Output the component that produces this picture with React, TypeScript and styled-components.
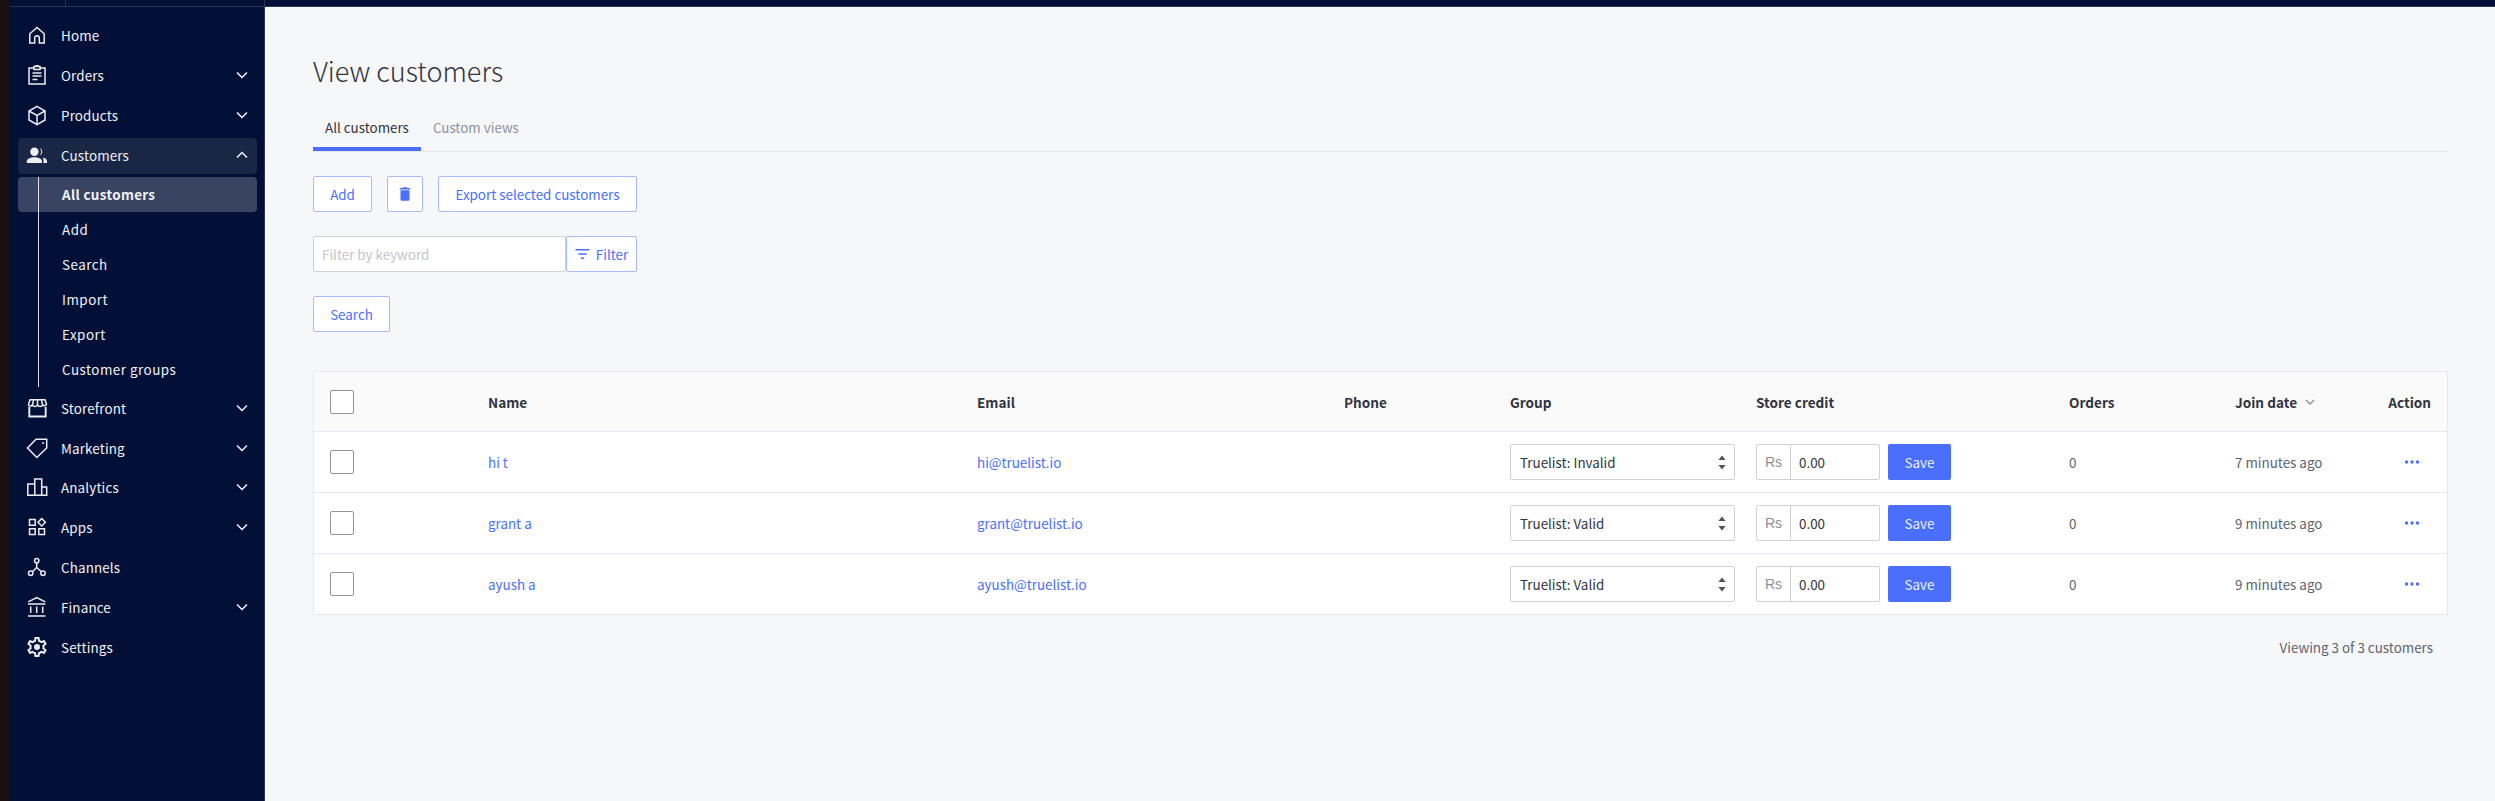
import React from "react";
import styled, { createGlobalStyle } from "styled-components";

const GlobalStyle = createGlobalStyle`
  html, body {
    margin: 0;
    padding: 0;
    background: #f6f7f9;
  }
  * {
    box-sizing: border-box;
  }
`;

const FONT = `"Noto Sans CJK SC", "Source Sans Pro", "Open Sans", sans-serif`;
const BLUE = "#4a6ffc";
const TEXT_SIZE = "13.4px";
const COLS = "174px 489px 367px 166px 246px 313px 166px 140px 1fr";

const Page = styled.div`
  display: flex;
  min-height: 801px;
  height: 100vh;
  overflow: hidden;
  font-family: ${FONT};
  font-size: ${TEXT_SIZE};
  color: #313440;
`;

const Edge = styled.div`
  width: 10px;
  flex: none;
  background: #1a0f12;
`;

const Frame = styled.div`
  flex: 1;
  display: flex;
  flex-direction: column;
  min-width: 0;
`;

const TopBar = styled.div`
  height: 7px;
  flex: none;
  display: flex;
  background: #020f36;
  border-bottom: 1px solid #2c3653;
`;

const TopCell = styled.div<{ $w: number }>`
  width: ${p => p.$w}px;
  flex: none;
  border-right: 1px solid #2c3653;
`;

const Body = styled.div`
  flex: 1;
  display: flex;
  min-height: 0;
`;

const Sidebar = styled.nav`
  width: 255px;
  flex: none;
  background: #020f36;
  border-right: 1px solid #2c3653;
  padding: 8.5px 7px 0 8px;
  color: #f2f3f6;
`;

const NavRow = styled.div<{ $open?: boolean }>`
  height: 39.8px;
  display: flex;
  align-items: center;
  padding: 0 8px 0 7px;
  border-radius: 4px;
  font-size: ${TEXT_SIZE};
  letter-spacing: 0.15px;
  ${p =>
    p.$open &&
    `
    background: #1a2646;
    height: 36px;
    margin: 3.1px 0 3px;
    padding-bottom: 1px;
  `}
`;

const NavIcon = styled.svg`
  width: 24px;
  height: 24px;
  flex: none;
  fill: none;
  stroke: #eceef2;
  stroke-width: 1.5;
  margin-right: 12px;
`;

const FilledNavIcon = styled(NavIcon)`
  fill: #eceef2;
  stroke: none;
`;

const NavLabel = styled.span`
  flex: 1;
`;

const Chevron = styled.svg`
  width: 14px;
  height: 14px;
  fill: none;
  stroke: #f2f3f6;
  stroke-width: 1.5;
`;

const SubList = styled.div`
  position: relative;
  padding-bottom: 1px;
  &::before {
    content: "";
    position: absolute;
    left: 20px;
    top: 0;
    bottom: 1px;
    width: 1px;
    background: #d8dbe3;
  }
`;

const SubRow = styled.div<{ $active?: boolean }>`
  position: relative;
  height: 35px;
  display: flex;
  align-items: center;
  padding: 0 0 1px 44px;
  border-radius: 4px;
  font-size: ${TEXT_SIZE};
  letter-spacing: ${p => (p.$active ? "0.35px" : "0.5px")};
  font-weight: ${p => (p.$active ? 700 : 400)};
  background: ${p => (p.$active ? "rgba(255, 255, 255, 0.22)" : "transparent")};
`;

const Main = styled.main`
  flex: 1;
  min-width: 0;
  padding: 0 47px 0 48px;
`;

const Title = styled.h1`
  margin: 0;
  padding-top: 44px;
  font-size: 27px;
  line-height: 40px;
  font-weight: 300;
  color: #313440;
`;

const Tabs = styled.div`
  display: flex;
  margin-top: 16px;
  border-bottom: 1px solid #e3e5ea;
  height: 45px;
`;

const Tab = styled.div<{ $active?: boolean }>`
  padding: 0 12px;
  height: 44px;
  display: flex;
  align-items: center;
  color: ${p => (p.$active ? "#313440" : "#8c93a0")};
  border-bottom: ${p => (p.$active ? `4px solid ${BLUE}` : "none")};
  padding-bottom: ${p => (p.$active ? "0" : "4px")};
`;

const Toolbar = styled.div`
  display: flex;
  gap: 15px;
  margin-top: 24px;
`;

const OutlineButton = styled.button<{ $w: number }>`
  width: ${p => p.$w}px;
  height: 36px;
  display: inline-flex;
  align-items: center;
  justify-content: center;
  gap: 6px;
  padding: 0;
  background: #fff;
  border: 1px solid #a9b9fd;
  border-radius: 2px;
  font-family: ${FONT};
  font-size: ${TEXT_SIZE};
  color: ${BLUE};
`;

const FilterRow = styled.div`
  display: flex;
  margin-top: 24px;
`;

const KeywordBox = styled.div`
  width: 253px;
  height: 36px;
  display: flex;
  align-items: center;
  padding: 0 0 1px 8px;
  background: #fff;
  border: 1px solid #d0d2d8;
  border-radius: 2px;
  color: #c4c6cc;
`;

const SearchRow = styled.div`
  margin-top: 24px;
`;

const Table = styled.div`
  margin-top: 39px;
  border: 1px solid #e6e7ef;
  background: #fff;
`;

const Row = styled.div<{ $head?: boolean }>`
  display: grid;
  grid-template-columns: ${COLS};
  align-items: center;
  height: ${p => (p.$head ? "60px" : "61px")};
  background: ${p => (p.$head ? "#fafafb" : "#fff")};
  border-bottom: 1px solid #e6e7ef;
  &:last-child {
    border-bottom: none;
    height: 60px;
  }
`;

const HeadCell = styled.div`
  font-weight: 700;
  font-size: 13.6px;
  color: #313440;
  display: flex;
  align-items: center;
  gap: 8px;
`;

const ActionHead = styled(HeadCell)`
  justify-content: flex-end;
  padding-right: 16px;
`;

const CheckCell = styled.div`
  padding-left: 16px;
  display: flex;
`;

const CheckBox = styled.div`
  width: 24px;
  height: 24px;
  background: #fff;
  border: 1px solid #959595;
  border-radius: 2px;
`;

const CustomerLink = styled.a`
  color: ${BLUE};
`;

const Cell = styled.div<{ $muted?: boolean }>`
  color: ${p => (p.$muted ? "#5e6371" : "#313440")};
`;

const GroupSelect = styled.div`
  width: 225px;
  height: 36px;
  display: flex;
  align-items: center;
  justify-content: space-between;
  padding: 0 8px 0 9px;
  border: 1px solid #d0d2d8;
  border-radius: 2px;
  color: #313440;
  background: #fff;
`;

const CreditCell = styled.div`
  display: flex;
  align-items: center;
  gap: 8px;
`;

const CreditField = styled.div`
  width: 124px;
  height: 36px;
  display: flex;
  border: 1px solid #d0d2d8;
  border-radius: 2px;
  background: #fff;
`;

const CreditPrefix = styled.div`
  width: 34px;
  flex: none;
  display: flex;
  align-items: center;
  justify-content: center;
  border-right: 1px solid #d0d2d8;
  color: #8c8f99;
  font-family: "Liberation Sans", sans-serif;
  font-size: 14px;
`;

const CreditValue = styled.div`
  flex: 1;
  display: flex;
  align-items: center;
  padding-left: 8px;
  color: #313440;
`;

const SaveButton = styled.button`
  width: 63px;
  height: 36px;
  padding: 0;
  border: none;
  border-radius: 2px;
  background: ${BLUE};
  color: #eef1ff;
  font-family: ${FONT};
  font-size: ${TEXT_SIZE};
`;

const ActionCell = styled.div`
  display: flex;
  justify-content: flex-end;
  padding-right: 27px;
`;

const ActionDots = styled.svg`
  width: 16px;
  height: 6px;
  fill: ${BLUE};
`;

const Footer = styled.div`
  margin-top: 22px;
  padding-right: 15px;
  text-align: right;
  color: #5e6371;
`;

const ChevronDown = () => (
  <Chevron viewBox="0 0 14 14">
    <path d="M2 4.5l5 5 5-5" />
  </Chevron>
);

const ChevronUp = () => (
  <Chevron viewBox="0 0 14 14">
    <path d="M2 9.5l5-5 5 5" />
  </Chevron>
);

const Home = () => (
  <NavIcon viewBox="0 0 24 24">
    <path d="M12 4.5l-7.2 6.3V20h4.9v-5a2.3 2.3 0 0 1 4.6 0v5h4.9v-9.2z" />
  </NavIcon>
);

const Orders = () => (
  <NavIcon viewBox="0 0 24 24">
    <path d="M9 5H4v16h16V5h-5" />
    <path d="M9 3.5h2v-.8h2v.8h2v3H9z" />
    <path d="M7.5 10h9M7.5 13h9M7.5 16.5h5" />
  </NavIcon>
);

const Products = () => (
  <NavIcon viewBox="0 0 24 24">
    <path d="M12 3.4l8 4.6v9l-8 4.6L4 17V8z" />
    <path d="M4 8l8 4.5L20 8M12 12.5v9" />
  </NavIcon>
);

const Customers = () => (
  <FilledNavIcon viewBox="0 0 24 24">
    <circle cx="9.4" cy="8.7" r="4.2" />
    <path d="M1.8 20v-1.8c0-2.6 4.6-4 7.6-4s7.6 1.4 7.6 4V20z" />
    <path d="M14.6 4.8a4.2 4.2 0 0 1 0 7.8 6 6 0 0 0 0-7.8z" />
    <path d="M18 14.6c2.2.6 4 1.7 4 3.5V20h-3.5v-2c0-1.400-.2-2.400-.5-3.400z" />
  </FilledNavIcon>
);

const Storefront = () => (
  <NavIcon viewBox="0 0 24 24">
    <path d="M4.300 11v9.500h16.400V11" strokeWidth="1.9" />
    <path d="M5 3.800h15l1.500 4.500a2 2 0 0 1-3.600.6 3 3 0 0 1-5.300 0 3 3 0 0 1-5.300 0 2 2 0 0 1-3.800-.6z" />
    <path d="M8.500 3.800l-1 5M12.500 3.800v5M16.500 3.800l1 5" />
  </NavIcon>
);

const Marketing = () => (
  <NavIcon viewBox="0 0 24 24">
    <path d="M21.700 3.300H11L2.500 12l9.300 9.500 9.900-9.500z" />
    <circle cx="18" cy="7" r="1" fill="#eceef2" stroke="none" />
  </NavIcon>
);

const Analytics = () => (
  <NavIcon viewBox="0 0 24 24">
    <path d="M2.800 20.300V9h7v11.300zM9.800 20.300V4h6.900v16.300zM16.700 20.300V12h5v8.300z" />
  </NavIcon>
);

const Apps = () => (
  <NavIcon viewBox="0 0 24 24">
    <path d="M4.500 4.500h5.700v5.700H4.500zM4.500 13.800h5.700v5.700H4.500zM13.800 13.800h5.700v5.700h-5.700zM16.700 3.600l3.700 3.700-3.700 3.700L13 7.300z" />
  </NavIcon>
);

const Channels = () => (
  <NavIcon viewBox="0 0 24 24">
    <circle cx="11.700" cy="5.700" r="2.200" />
    <circle cx="5.700" cy="18.300" r="2.200" />
    <circle cx="18" cy="18.300" r="2.200" />
    <path d="M11.700 8v4.500L7.300 16.700M11.700 12.500l4.700 4.200" />
  </NavIcon>
);

const Finance = () => (
  <NavIcon viewBox="0 0 24 24">
    <path d="M3.200 6.800L11.700 2.600l8.600 4.200M3 9h17.500M5.700 11.500v6.500M11.700 11.500v6.500M17.700 11.500v6.500M3 21h17.500" />
  </NavIcon>
);

const Settings = () => (
  <FilledNavIcon viewBox="0 0 24 24">
    <path d="M19.430 12.980c.04-.32.07-.64.07-.98 0-.34-.03-.66-.07-.98l2.110-1.650c.19-.15.24-.42.12-.64l-2-3.460c-.09-.16-.26-.25-.44-.25-.06 0-.12.01-.17.03l-2.490 1c-.52-.4-1.080-.73-1.690-.98l-.38-2.650C14.460 2.180 14.250 2 14 2h-4c-.25 0-.46.18-.49.42l-.38 2.650c-.61.25-1.170.59-1.690.98l-2.490-1c-.06-.02-.12-.03-.18-.03-.17 0-.34.09-.43.25l-2 3.460c-.13.22-.07.49.12.64l2.110 1.650c-.04.32-.07.65-.07.98 0 .33.03.66.07.98l-2.110 1.650c-.19.15-.24.42-.12.64l2 3.460c.09.16.26.25.44.25.06 0 .12-.01.17-.03l2.490-1c.52.4 1.080.73 1.690.98l.38 2.650c.03.24.24.42.49.42h4c.25 0 .46-.18.49-.42l.38-2.650c.61-.25 1.170-.59 1.690-.98l2.490 1c.06.02.12.03.18.03.17 0 .34-.09.43-.25l2-3.460c.12-.22.07-.49-.12-.64l-2.110-1.650zm-1.980-1.710c.04.31.05.52.05.73 0 .21-.02.43-.05.73l-.14 1.130.89.7 1.080.84-.7 1.210-1.270-.51-1.040-.42-.9.68c-.43.32-.84.56-1.250.73l-1.060.43-.16 1.130-.2 1.350h-1.400l-.19-1.350-.16-1.130-1.060-.43c-.43-.18-.83-.41-1.230-.71l-.91-.7-1.060.43-1.270.51-.7-1.210 1.080-.84.89-.7-.14-1.130c-.03-.31-.05-.54-.05-.74s.02-.43.05-.73l.14-1.130-.89-.7-1.080-.84.7-1.210 1.270.51 1.040.42.9-.68c.43-.32.84-.56 1.250-.73l1.060-.43.16-1.130.2-1.350h1.390l.19 1.350.16 1.130 1.060.43c.43.18.83.41 1.230.71l.91.7 1.060-.43 1.270-.51.7 1.210-1.070.85-.89.7.14 1.130z" />
    <circle cx="12" cy="12" r="3" />
  </FilledNavIcon>
);

const Trash = () => (
  <svg width="18" height="18" viewBox="0 0 24 24" fill={BLUE}>
    <path d="M6 19c0 1.100.9 2 2 2h8c1.100 0 2-.9 2-2V7H6v12zM19 4h-3.500l-1-1h-5l-1 1H5v2h14V4z" />
  </svg>
);

const FilterIcon = () => (
  <svg width="15" height="12" viewBox="0 0 15 12" fill={BLUE}>
    <path d="M.5 1h14v1.400H.5zM3.300 5.300h8.400v1.400H3.300zM5.800 9.600h3.400V11H5.800z" />
  </svg>
);

const SortCaret = () => (
  <svg width="10" height="6" viewBox="0 0 10 6" fill="none" stroke="#8c8f99" strokeWidth="1.300">
    <path d="M1 1l4 4 4-4" />
  </svg>
);

const SelectArrows = () => (
  <svg width="8" height="15" viewBox="0 0 8 15" fill="#50535f">
    <path d="M4 .5L7.600 5H.4zM4 14.500L.4 10h7.200z" />
  </svg>
);

const navTop = [
  { label: "Home", icon: <Home /> },
  { label: "Orders", icon: <Orders />, more: true },
  { label: "Products", icon: <Products />, more: true },
];

const navBottom = [
  { label: "Storefront", icon: <Storefront />, more: true },
  { label: "Marketing", icon: <Marketing />, more: true },
  { label: "Analytics", icon: <Analytics />, more: true },
  { label: "Apps", icon: <Apps />, more: true },
  { label: "Channels", icon: <Channels /> },
  { label: "Finance", icon: <Finance />, more: true },
  { label: "Settings", icon: <Settings /> },
];

const subItems = ["All customers", "Add", "Search", "Import", "Export", "Customer groups"];

const customers = [
  { name: "hi t", email: "hi@truelist.io", group: "Truelist: Invalid", joined: "7 minutes ago" },
  { name: "grant a", email: "grant@truelist.io", group: "Truelist: Valid", joined: "9 minutes ago" },
  { name: "ayush a", email: "ayush@truelist.io", group: "Truelist: Valid", joined: "9 minutes ago" },
];

const App = () => {
  return (
    <Page>
      <GlobalStyle />
      <Edge />
      <Frame>
        <TopBar>
          <TopCell $w={56} />
          <TopCell $w={199} />
        </TopBar>
        <Body>
          <Sidebar>
            {navTop.map(item => (
              <NavRow key={item.label}>
                {item.icon}
                <NavLabel>{item.label}</NavLabel>
                {item.more && <ChevronDown />}
              </NavRow>
            ))}
            <NavRow $open>
              <Customers />
              <NavLabel>Customers</NavLabel>
              <ChevronUp />
            </NavRow>
            <SubList>
              {subItems.map((item, i) => (
                <SubRow key={item} $active={i === 0}>
                  {item}
                </SubRow>
              ))}
            </SubList>
            {navBottom.map(item => (
              <NavRow key={item.label}>
                {item.icon}
                <NavLabel>{item.label}</NavLabel>
                {item.more && <ChevronDown />}
              </NavRow>
            ))}
          </Sidebar>
          <Main>
            <Title>View customers</Title>
            <Tabs>
              <Tab $active>All customers</Tab>
              <Tab>Custom views</Tab>
            </Tabs>
            <Toolbar>
              <OutlineButton $w={59}>Add</OutlineButton>
              <OutlineButton $w={36}>
                <Trash />
              </OutlineButton>
              <OutlineButton $w={199}>Export selected customers</OutlineButton>
            </Toolbar>
            <FilterRow>
              <KeywordBox>Filter by keyword</KeywordBox>
              <OutlineButton $w={71}>
                <FilterIcon />
                Filter
              </OutlineButton>
            </FilterRow>
            <SearchRow>
              <OutlineButton $w={77}>Search</OutlineButton>
            </SearchRow>
            <Table>
              <Row $head>
                <CheckCell>
                  <CheckBox />
                </CheckCell>
                <HeadCell>Name</HeadCell>
                <HeadCell>Email</HeadCell>
                <HeadCell>Phone</HeadCell>
                <HeadCell>Group</HeadCell>
                <HeadCell>Store credit</HeadCell>
                <HeadCell>Orders</HeadCell>
                <HeadCell>
                  Join date
                  <SortCaret />
                </HeadCell>
                <ActionHead>Action</ActionHead>
              </Row>
              {customers.map(c => (
                <Row key={c.email}>
                  <CheckCell>
                    <CheckBox />
                  </CheckCell>
                  <Cell>
                    <CustomerLink>{c.name}</CustomerLink>
                  </Cell>
                  <Cell>
                    <CustomerLink>{c.email}</CustomerLink>
                  </Cell>
                  <Cell />
                  <Cell>
                    <GroupSelect>
                      {c.group}
                      <SelectArrows />
                    </GroupSelect>
                  </Cell>
                  <CreditCell>
                    <CreditField>
                      <CreditPrefix>Rs</CreditPrefix>
                      <CreditValue>0.00</CreditValue>
                    </CreditField>
                    <SaveButton>Save</SaveButton>
                  </CreditCell>
                  <Cell $muted>0</Cell>
                  <Cell $muted>{c.joined}</Cell>
                  <ActionCell>
                    <ActionDots viewBox="0 0 16 6">
                      <circle cx="2.500" cy="3" r="1.700" />
                      <circle cx="8" cy="3" r="1.700" />
                      <circle cx="13.500" cy="3" r="1.700" />
                    </ActionDots>
                  </ActionCell>
                </Row>
              ))}
            </Table>
            <Footer>Viewing 3 of 3 customers</Footer>
          </Main>
        </Body>
      </Frame>
    </Page>
  );
};

export default App;
